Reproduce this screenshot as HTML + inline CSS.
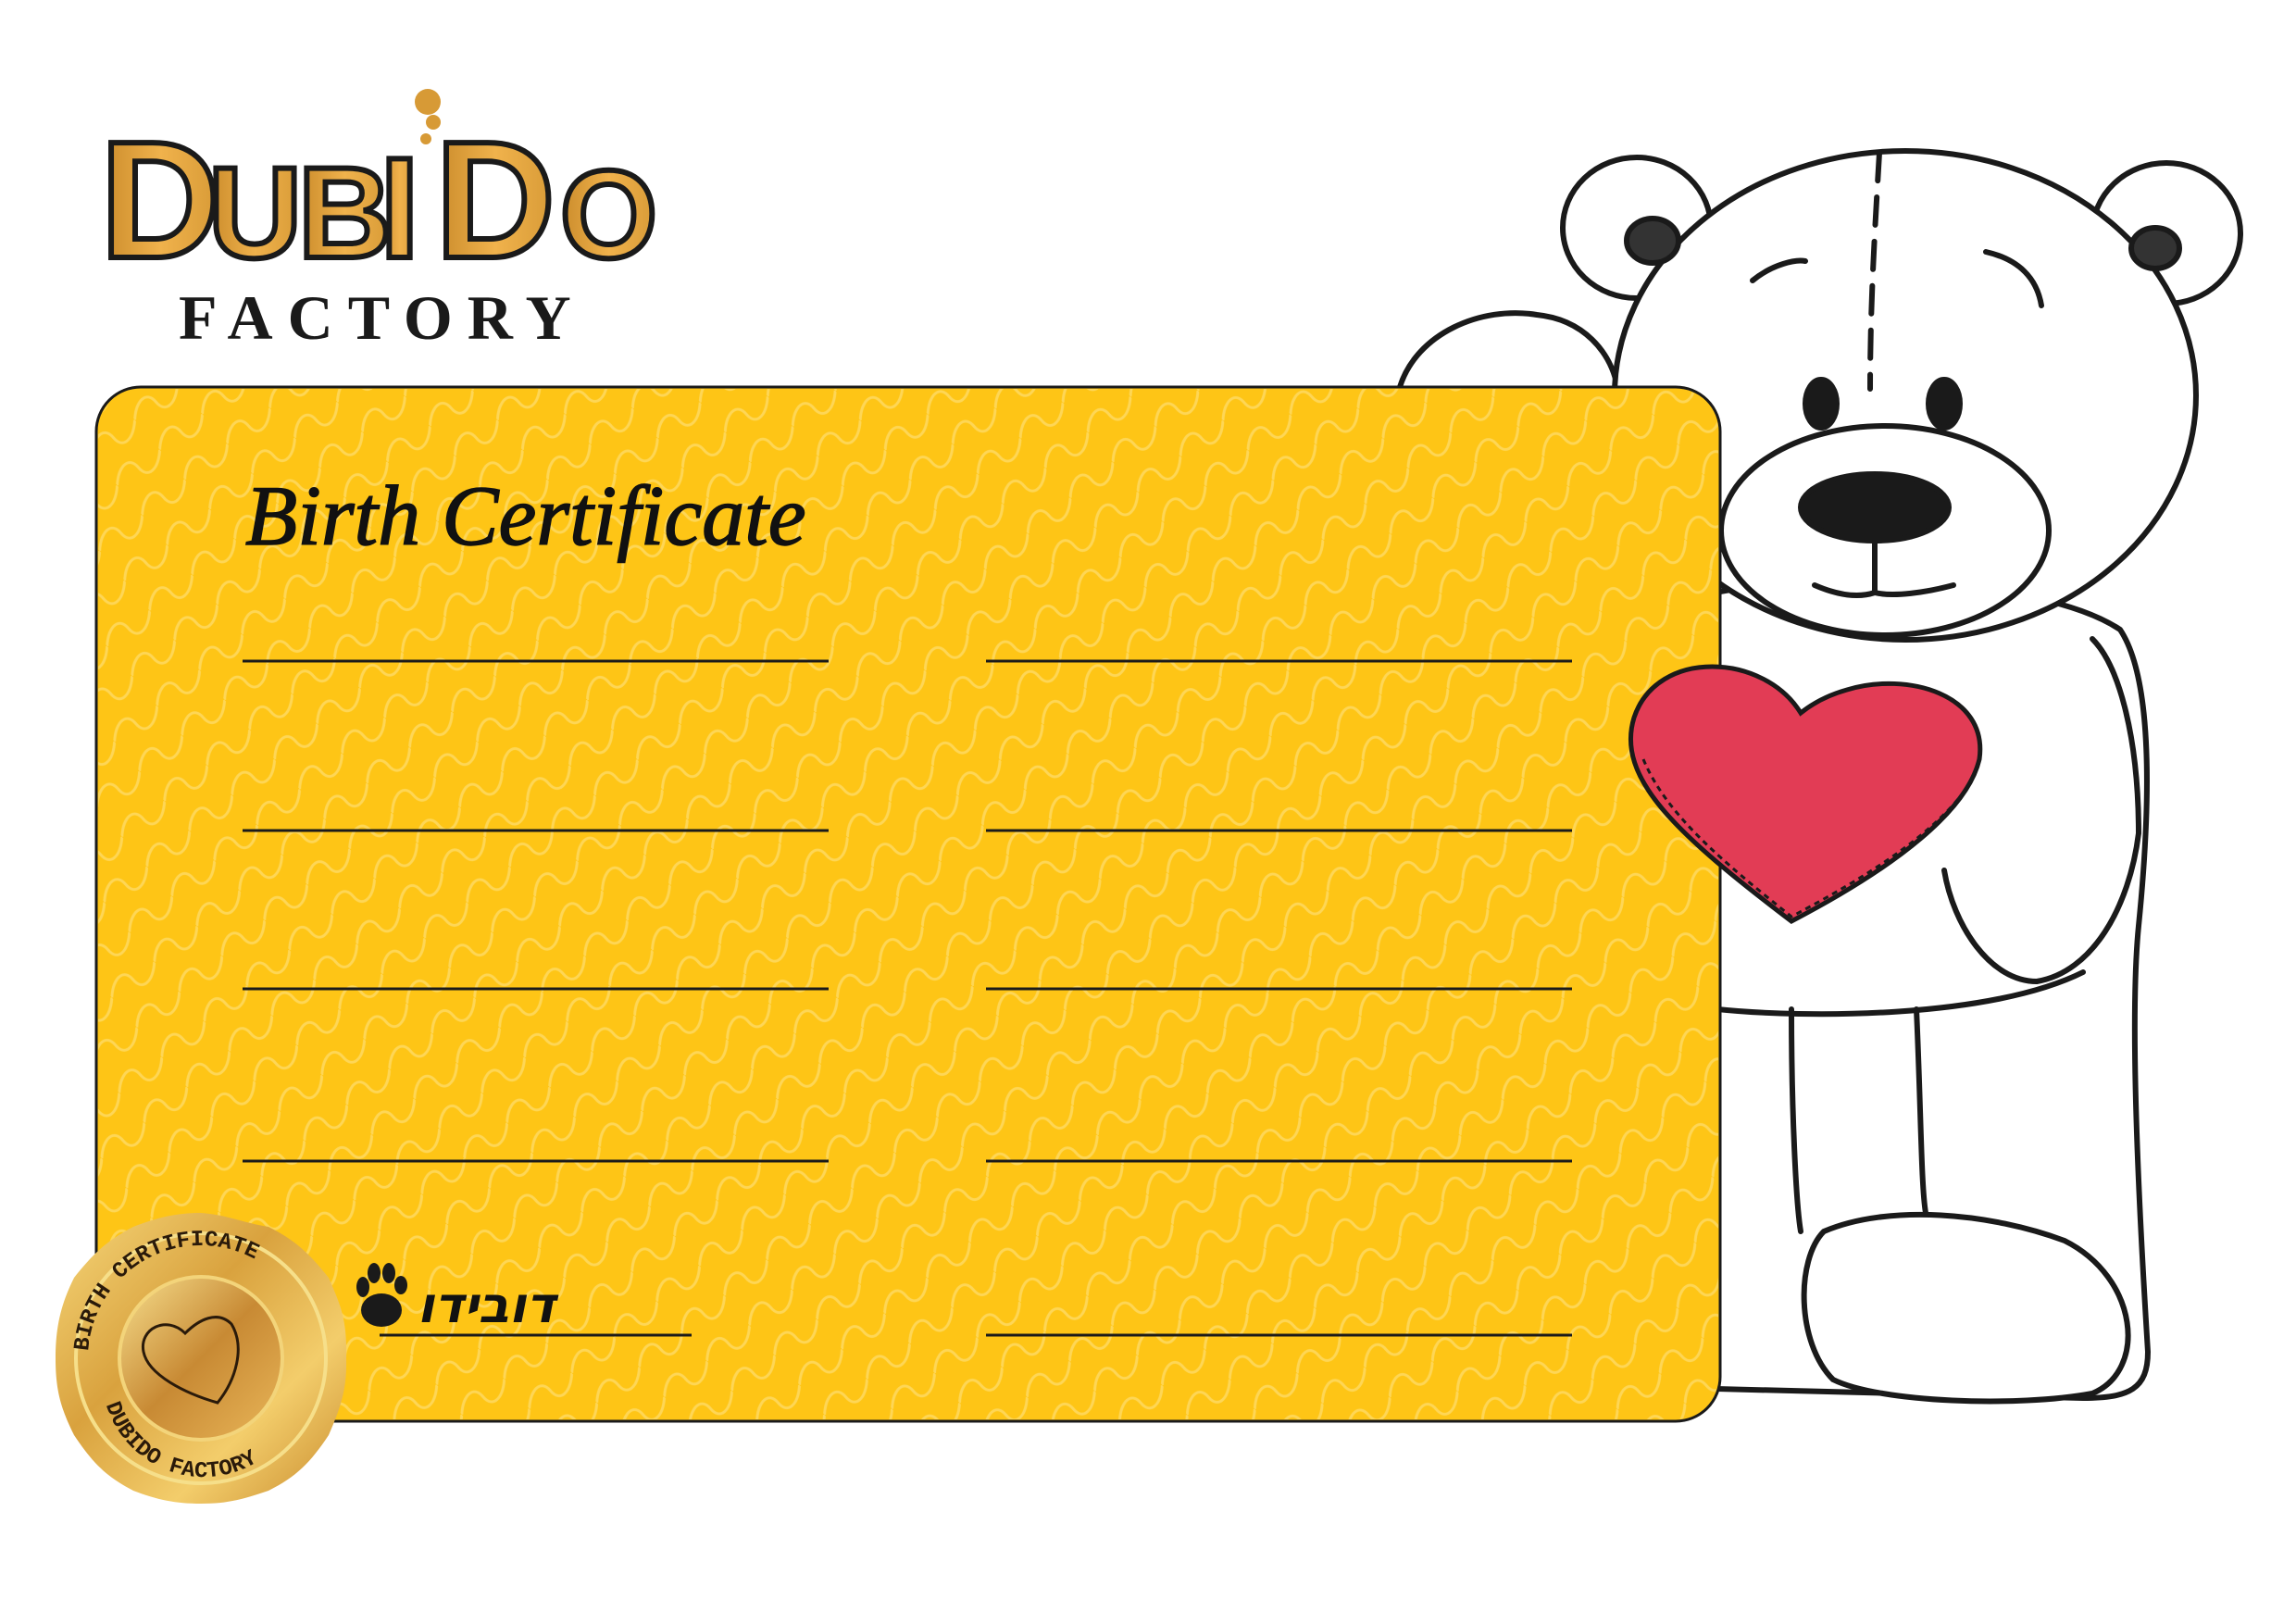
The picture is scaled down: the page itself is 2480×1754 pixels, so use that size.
<!DOCTYPE html>
<html><head><meta charset="utf-8"><style>
html,body{margin:0;padding:0;background:#fff;}
body{width:2480px;height:1754px;position:relative;overflow:hidden;font-family:"Liberation Sans",sans-serif;}
svg{position:absolute;left:0;top:0;}
</style></head><body>
<svg width="2480" height="1754" viewBox="0 0 2480 1754" xmlns="http://www.w3.org/2000/svg">
<defs>
<pattern id="wv" width="60" height="42" patternUnits="userSpaceOnUse" patternTransform="rotate(-40)">
<path d="M0 21 C15 5 30 5 30 21 S45 37 60 21" fill="none" stroke="#fddc6a" stroke-width="3" opacity="0.75"/>
</pattern>
<linearGradient id="gold" x1="0" y1="0" x2="1" y2="1">
<stop offset="0" stop-color="#f6d77a"/><stop offset="0.4" stop-color="#d9a23e"/><stop offset="0.7" stop-color="#f3cd6b"/><stop offset="1" stop-color="#c98c2e"/>
</linearGradient>
<linearGradient id="gold2" x1="0" y1="0" x2="1" y2="1">
<stop offset="0" stop-color="#f7e08f"/><stop offset="0.5" stop-color="#c88a34"/><stop offset="1" stop-color="#e9b659"/>
</linearGradient>
<linearGradient id="lg" x1="0" y1="0" x2="1" y2="0">
<stop offset="0" stop-color="#c98a2a"/><stop offset="0.5" stop-color="#f0b24c"/><stop offset="1" stop-color="#d79a36"/>
</linearGradient>
<path id="arcTop" d="M95 1467 A122 122 0 0 1 339 1467"/>
<path id="arcBot" d="M110 1490 A110 110 0 0 0 330 1480"/>
</defs>

<g fill="#fff" stroke="#1a1a1a" stroke-width="6" stroke-linecap="round">
<path d="M1512 418 C1530 360 1600 330 1660 340 C1710 345 1740 380 1747 418"/>
<ellipse cx="1768" cy="246" rx="80" ry="76"/>
<ellipse cx="2340" cy="252" rx="80" ry="76"/>
<path d="M1853 640 C1950 620 2200 620 2290 680 C2330 740 2320 900 2310 1000 C2300 1100 2310 1300 2320 1460 C2320 1500 2300 1510 2250 1510 L1853 1500 Z"/>
<path d="M1970 1330 C2040 1300 2150 1310 2230 1340 C2310 1380 2320 1480 2260 1505 C2180 1520 2030 1515 1980 1490 C1940 1450 1940 1360 1970 1330 Z"/>
<path d="M1935 1090 C1935 1200 1940 1300 1945 1330" fill="none"/>
<path d="M2070 1090 C2075 1200 2075 1280 2080 1310" fill="none"/>
<path d="M1855 1090 C1950 1100 2150 1100 2250 1050" fill="none"/>
<path d="M2100 940 C2110 1000 2150 1060 2200 1060 C2260 1050 2300 980 2310 900 C2310 800 2290 720 2260 690" fill="none"/>
<ellipse cx="2058" cy="427" rx="314" ry="264"/>
<path d="M2030 165 C2025 250 2020 330 2020 420" fill="none" stroke-dasharray="30 18"/>
<ellipse cx="1785" cy="260" rx="28" ry="24" fill="#333"/>
<ellipse cx="2328" cy="268" rx="26" ry="22" fill="#333"/>
<path d="M1893 303 C1915 285 1940 280 1950 282" fill="none"/>
<path d="M2145 272 C2180 280 2200 300 2205 330" fill="none"/>
<ellipse cx="1967" cy="436" rx="17" ry="26" fill="#1a1a1a"/>
<ellipse cx="2100" cy="436" rx="17" ry="26" fill="#1a1a1a"/>
<ellipse cx="2036" cy="573" rx="177" ry="113"/>
<ellipse cx="2025" cy="548" rx="80" ry="36" fill="#1a1a1a"/>
<path d="M2025 582 L2025 640 M1960 632 C1990 645 2010 645 2025 640 C2045 645 2080 640 2110 632" fill="none"/>
</g>

<rect x="104" y="418" width="1754" height="1117" rx="48" fill="#fec516" stroke="#1a1a1a" stroke-width="3"/>
<rect x="106" y="420" width="1750" height="1113" rx="46" fill="url(#wv)"/>

<path d="M1945 770 C1905 705 1790 700 1765 775 C1745 840 1810 900 1935 995 C2050 935 2125 875 2138 820 C2148 750 2060 725 1995 745 C1970 752 1955 762 1945 770 Z" fill="#e23c55" stroke="#1a1a1a" stroke-width="5"/>
<path d="M1775 820 C1800 880 1860 930 1935 990 C2020 945 2090 900 2125 850" fill="none" stroke="#1a1a1a" stroke-width="3" stroke-dasharray="6 5"/>

<g stroke="#1a1a1a" stroke-width="3">
<line x1="262" y1="714" x2="895" y2="714"/><line x1="1065" y1="714" x2="1698" y2="714"/>
<line x1="262" y1="897" x2="895" y2="897"/><line x1="1065" y1="897" x2="1698" y2="897"/>
<line x1="262" y1="1068" x2="895" y2="1068"/><line x1="1065" y1="1068" x2="1698" y2="1068"/>
<line x1="262" y1="1254" x2="895" y2="1254"/><line x1="1065" y1="1254" x2="1698" y2="1254"/>
<line x1="410" y1="1442" x2="747" y2="1442"/><line x1="1065" y1="1442" x2="1698" y2="1442"/>
</g>

<text x="265" y="588" font-family="Liberation Serif,serif" font-style="italic" font-size="92" fill="#111" stroke="#111" stroke-width="1.5">Birth Certificate</text>

<g fill="#1a1a1a">
<ellipse cx="412" cy="1415" rx="22" ry="18"/>
<ellipse cx="392" cy="1390" rx="7" ry="11"/><ellipse cx="404" cy="1375" rx="7" ry="11"/><ellipse cx="420" cy="1375" rx="7" ry="11"/><ellipse cx="433" cy="1388" rx="7" ry="10"/>
</g>
<text x="600" y="1428" text-anchor="end" font-family="DejaVu Sans,sans-serif" font-style="italic" font-weight="bold" font-size="54" fill="#111">דובידו</text>

<g>
<path d="M217 1310 C245 1312 260 1320 290 1325 C320 1340 335 1355 355 1380 C368 1410 375 1425 374 1467 C375 1500 368 1520 355 1550 C335 1580 320 1595 290 1610 C260 1620 245 1624 217 1624 C190 1624 170 1620 144 1610 C115 1595 100 1580 80 1550 C65 1520 60 1500 60 1467 C60 1435 65 1410 80 1380 C100 1355 115 1340 144 1325 C170 1315 190 1310 217 1310 Z" fill="url(#gold)"/>
<circle cx="217" cy="1467" r="135" fill="none" stroke="#f6df8a" stroke-width="4"/>
<circle cx="217" cy="1467" r="88" fill="url(#gold2)" stroke="#f3d47a" stroke-width="4"/>
<path d="M200 1440 C180 1420 150 1435 155 1460 C160 1485 200 1505 235 1515 C255 1490 265 1455 250 1430 C235 1415 215 1425 200 1440 Z" fill="none" stroke="#2a1a0a" stroke-width="3"/>
<text font-family="Liberation Mono,monospace" font-weight="bold" font-size="24" fill="#2a1a0a"><textPath href="#arcTop" startOffset="2%">BIRTH CERTIFICATE</textPath></text>
<text font-family="Liberation Mono,monospace" font-weight="bold" font-size="24" fill="#2a1a0a"><textPath href="#arcBot" startOffset="8%">DUBIDO FACTORY</textPath></text>
</g>

<g font-family="Liberation Sans,sans-serif" font-weight="bold" fill="url(#lg)" stroke="#1a1a1a" stroke-width="6">
<text x="108" y="278" font-size="180">D</text>
<text x="225" y="278" font-size="140">U</text>
<text x="322" y="278" font-size="140">B</text>
<text x="410" y="278" font-size="155">I</text>
<text x="470" y="278" font-size="180">D</text>
<text x="605" y="278" font-size="135">O</text>
</g>
<circle cx="462" cy="110" r="14" fill="#d79a36"/><circle cx="468" cy="132" r="8" fill="#d79a36"/><circle cx="460" cy="150" r="6" fill="#d79a36"/>
<text x="193" y="366" font-family="Liberation Serif,serif" font-weight="bold" font-size="68" letter-spacing="16" fill="#1a1a1a">FACTORY</text>
</svg>
</body></html>
